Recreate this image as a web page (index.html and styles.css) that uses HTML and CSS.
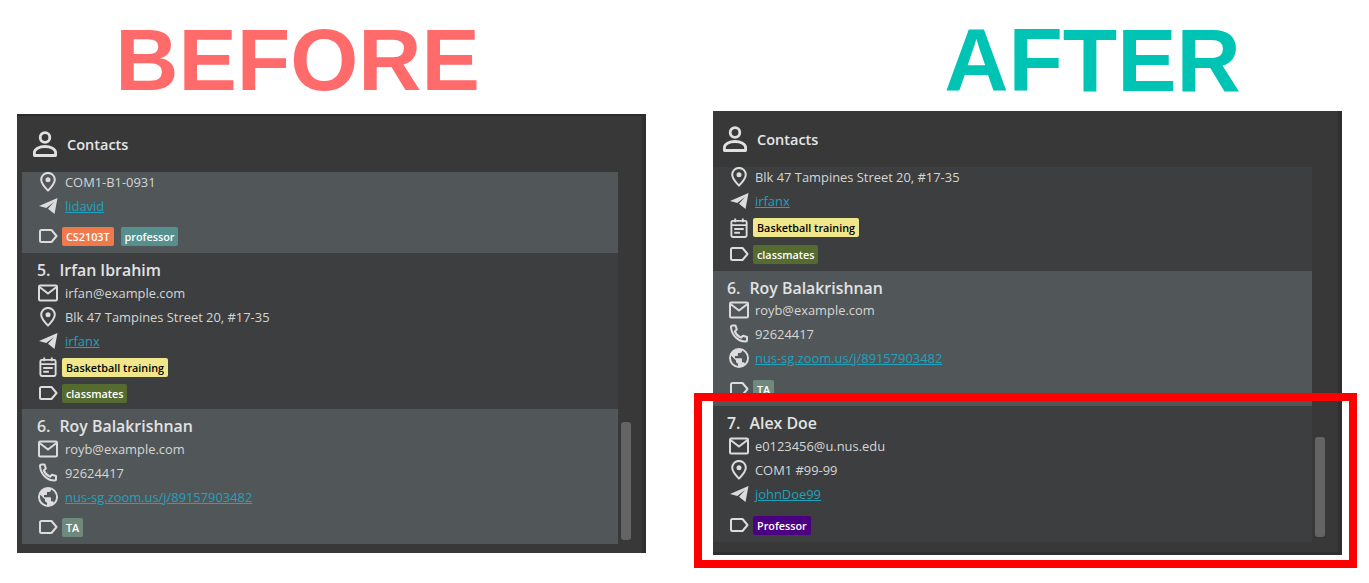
FILE: index.html
```html
<!DOCTYPE html>
<html lang="en">
<head>
  <meta charset="UTF-8">
  <title>Before and after</title>
  <link rel="stylesheet" href="styles.css">
</head>
<body>
  <svg class="sprites" width="0" height="0">
    <symbol id="i-person" viewBox="0 0 26 26">
      <circle cx="13" cy="6.500" r="4.800" fill="none" stroke="currentColor" stroke-width="2.800"/>
      <path d="M2.400 24.500v-3c0-3.600 4.800-6 10.600-6s10.600 2.400 10.600 6v3z" fill="none" stroke="currentColor" stroke-width="2.800" stroke-linejoin="round"/>
    </symbol>
    <symbol id="i-mail" viewBox="0 0 20 17">
      <rect x="1" y="1" width="18" height="15" rx="1.200" fill="none" stroke="currentColor" stroke-width="2"/>
      <path d="M1.500 2.500L10 9l8.500-6.500" fill="none" stroke="currentColor" stroke-width="2"/>
    </symbol>
    <symbol id="i-pin" viewBox="0 0 16 20">
      <path d="M8 18.600C4.500 15 1.200 11.500 1.200 7.700a6.800 6.800 0 0 1 13.600 0c0 3.800-3.300 7.300-6.800 10.900z" fill="none" stroke="currentColor" stroke-width="2" stroke-linejoin="round"/>
      <circle cx="8" cy="7.700" r="2.500" fill="currentColor"/>
    </symbol>
    <symbol id="i-send" viewBox="0 0 20 17">
      <path d="M1 8.500L19.500 .5 16.500 16.500 10 11.200 16 4.500 8.300 10.500z" fill="currentColor"/>
    </symbol>
    <symbol id="i-calendar" viewBox="0 0 18 21">
      <rect x="1" y="3" width="16" height="17" rx="1.500" fill="none" stroke="currentColor" stroke-width="2"/>
      <path d="M5 0.500v4M13 0.500v4M1 7.500h16M4 11.500h10M4 15.500h6" fill="none" stroke="currentColor" stroke-width="2"/>
    </symbol>
    <symbol id="i-label" viewBox="0 0 20 14">
      <path d="M3.500 1h10l5 6-5 6h-10A1.500 1.500 0 0 1 2 11.500v-9A1.500 1.500 0 0 1 3.500 1z" fill="none" stroke="currentColor" stroke-width="2" stroke-linejoin="round"/>
    </symbol>
    <symbol id="i-phone" viewBox="0 0 20 20">
      <path d="M3.500 1.500h3l1.300 4-2 2c1.200 2.800 3.400 5 6.200 6.200l2-2 4 1.300v3c0 .8-.7 1.500-1.500 1.500C9 17.500 2.500 11 2 3 2 2.200 2.700 1.500 3.500 1.500z" fill="none" stroke="currentColor" stroke-width="2" stroke-linejoin="round"/>
    </symbol>
    <symbol id="i-globe" viewBox="0 0 20 20">
      <path fill-rule="evenodd" d="M10 0a10 10 0 1 0 0 20 10 10 0 0 0 0-20zM2 10c0-.8.100-1.500.300-2.200L7 12.500v1c0 1.100.9 2 2 2v2.400A8 8 0 0 1 2 10zm13.800 5.600c-.3-.8-1-1.300-1.800-1.300h-1v-3c0-.6-.4-1-1-1H6V8h2c.6 0 1-.4 1-1V5h2c1.100 0 2-.9 2-2v-.4a8 8 0 0 1 2.800 13z" fill="currentColor"/>
    </symbol>
  </svg>

  <main class="page">
    <section class="side side-before">
      <h1 class="title title-before">BEFORE</h1>
      <div class="panel panel-before">
        <header class="panel-head">
          <svg class="head-icon"><use href="#i-person"/></svg>
          <span>Contacts</span>
        </header>
        <div class="body-row">
          <div class="list">
            <article class="card card-light card-cut">
              <div class="row"><svg class="icon"><use href="#i-pin"/></svg>COM1-B1-0931</div>
              <div class="row"><svg class="icon"><use href="#i-send"/></svg><a href="#">lidavid</a></div>
              <div class="row-tags row-gap"><svg class="icon"><use href="#i-label"/></svg><span class="tag tag-orange">CS2103T</span><span class="tag tag-teal">professor</span></div>
            </article>
            <article class="card card-dark">
              <h2 class="name"><span class="num">5.</span>Irfan Ibrahim</h2>
              <div class="row"><svg class="icon"><use href="#i-mail"/></svg>irfan@example.com</div>
              <div class="row"><svg class="icon"><use href="#i-pin"/></svg>Blk 47 Tampines Street 20, #17-35</div>
              <div class="row"><svg class="icon"><use href="#i-send"/></svg><a href="#">irfanx</a></div>
              <div class="row-tags row-sched"><svg class="icon"><use href="#i-calendar"/></svg><span class="tag tag-yellow">Basketball training</span></div>
              <div class="row-tags"><svg class="icon"><use href="#i-label"/></svg><span class="tag tag-green">classmates</span></div>
            </article>
            <article class="card card-light">
              <h2 class="name"><span class="num">6.</span>Roy Balakrishnan</h2>
              <div class="row"><svg class="icon"><use href="#i-mail"/></svg>royb@example.com</div>
              <div class="row"><svg class="icon"><use href="#i-phone"/></svg>92624417</div>
              <div class="row"><svg class="icon"><use href="#i-globe"/></svg><a href="#">nus-sg.zoom.us/j/89157903482</a></div>
              <div class="row-tags row-gap"><svg class="icon"><use href="#i-label"/></svg><span class="tag tag-sage">TA</span></div>
            </article>
          </div>
          <div class="track track-before"><div class="thumb thumb-before"></div></div>
        </div>
      </div>
    </section>

    <section class="side side-after">
      <h1 class="title title-after">AFTER</h1>
      <div class="panel panel-after">
        <header class="panel-head">
          <svg class="head-icon"><use href="#i-person"/></svg>
          <span>Contacts</span>
        </header>
        <div class="body-row">
          <div class="list">
            <article class="card card-dark card-cut">
              <div class="row"><svg class="icon"><use href="#i-pin"/></svg>Blk 47 Tampines Street 20, #17-35</div>
              <div class="row"><svg class="icon"><use href="#i-send"/></svg><a href="#">irfanx</a></div>
              <div class="row-tags row-sched"><svg class="icon"><use href="#i-calendar"/></svg><span class="tag tag-yellow">Basketball training</span></div>
              <div class="row-tags"><svg class="icon"><use href="#i-label"/></svg><span class="tag tag-green">classmates</span></div>
            </article>
            <article class="card card-light">
              <h2 class="name"><span class="num">6.</span>Roy Balakrishnan</h2>
              <div class="row"><svg class="icon"><use href="#i-mail"/></svg>royb@example.com</div>
              <div class="row"><svg class="icon"><use href="#i-phone"/></svg>92624417</div>
              <div class="row"><svg class="icon"><use href="#i-globe"/></svg><a href="#">nus-sg.zoom.us/j/89157903482</a></div>
              <div class="row-tags row-gap"><svg class="icon"><use href="#i-label"/></svg><span class="tag tag-sage">TA</span></div>
            </article>
            <article class="card card-dark">
              <h2 class="name"><span class="num">7.</span>Alex Doe</h2>
              <div class="row"><svg class="icon"><use href="#i-mail"/></svg>e0123456@u.nus.edu</div>
              <div class="row"><svg class="icon"><use href="#i-pin"/></svg>COM1 #99-99</div>
              <div class="row"><svg class="icon"><use href="#i-send"/></svg><a href="#">johnDoe99</a></div>
              <div class="row-tags row-gap"><svg class="icon"><use href="#i-label"/></svg><span class="tag tag-purple">Professor</span></div>
            </article>
          </div>
          <div class="track track-after"><div class="thumb thumb-after"></div></div>
        </div>
      </div>
      <div class="highlight"></div>
    </section>
  </main>
</body>
</html>
```

FILE: styles.css
```css
body {
  margin: 0;
  background: #fff;
  font-family: "Open Sans", "Noto Sans", sans-serif;
  color: #d6d6d6;
}
.sprites {
  position: absolute;
}
.page {
  display: flex;
  align-items: flex-start;
  min-height: 583px;
  padding-left: 17px;
  gap: 67px;
}
.side {
  position: relative;
  width: 629px;
  display: flex;
  flex-direction: column;
}
.title {
  margin: 0;
  font-family: "Liberation Sans", Arial, sans-serif;
  font-size: 87.500px;
  font-weight: 700;
  text-align: center;
  white-space: nowrap;
}
.title-before {
  height: 114px;
  line-height: 120px;
  padding-right: 68px;
  color: #ff6b6b;
}
.title-after {
  height: 111px;
  line-height: 120px;
  padding-left: 130px;
  font-size: 89px;
  color: #00c4b3;
}
.panel {
  background: #383838;
  border-right: 4px solid #2f2f2f;
  display: flex;
  flex-direction: column;
  overflow: hidden;
}
.panel-before {
  height: 439px;
  border-top: 2px solid #2b2b2b;
  box-sizing: border-box;
}
.panel-after {
  height: 444px;
  box-sizing: border-box;
  border-bottom: 3px solid #2f2f2f;
}
.panel-head {
  display: flex;
  align-items: center;
  gap: 9px;
  font-size: 14.5px;
  font-weight: 600;
  color: #e6e6e6;
}
.panel-before .panel-head {
  height: 56px;
  padding-left: 15px;
}
.panel-after .panel-head {
  height: 56px;
  padding-left: 9px;
}
.head-icon {
  width: 26px;
  height: 26px;
  color: #e0e0e0;
}
.body-row {
  flex: 1;
  display: flex;
  min-height: 0;
}
.list {
  overflow: hidden;
}
.panel-before .list {
  margin-left: 5px;
  width: 596px;
}
.panel-after .list {
  width: 599px;
}
.card {
  padding: 6px 0 4px 16px;
}
.card-cut {
  padding-top: 0;
}
.card-cut .row:first-child {
  margin-top: -2px;
}
.card-light {
  background: #515658;
}
.card-dark {
  background: #3c3e3f;
}
.name {
  margin: 0 0 0 -1px;
  height: 22px;
  line-height: 22px;
  font-size: 15.900px;
  font-weight: 600;
  color: #e2e2e2;
}
.num {
  margin-right: 9px;
}
.panel-after .name {
  margin-left: -2px;
}
.panel-after .card-light .name {
  height: 21px;
}
.row,
.row-tags {
  display: flex;
  align-items: center;
  font-size: 12.900px;
}
.row {
  height: 24px;
}
.row-tags {
  height: 26px;
}
.row-sched {
  margin-top: 1px;
}
.panel-before .card-dark {
  padding-bottom: 3px;
}
.panel-after .row-sched {
  height: 27px;
}
.row-gap {
  margin-top: 5px;
}
.panel-after .row-gap {
  margin-top: 6px;
}
.icon {
  width: 20px;
  height: 20px;
  flex: none;
  margin-right: 7px;
  color: #dcdcdc;
}
.panel-after .row .icon {
  margin-right: 6px;
}
.row-tags .icon {
  margin-right: 4px;
}
a {
  color: #22a2bd;
}
.tag {
  padding: 0 4px;
  height: 19px;
  line-height: 19px;
  border-radius: 2px;
  font-size: 10.800px;
  font-weight: 600;
  color: #fff;
  margin-right: 7px;
}
.tag-orange { background: #f0794c; }
.tag-teal { background: #55908f; }
.tag-yellow { background: #f0e68c; color: #000; }
.tag-green { background: #556b2f; }
.tag-sage { background: #6f8a7c; }
.tag-purple { background: #4b0082; }
.track {
  flex: none;
  display: flex;
  flex-direction: column;
}
.thumb {
  width: 10px;
  border-radius: 3px;
  background: #646464;
}
.track-before {
  padding: 250px 0 0 3px;
}
.thumb-before {
  height: 118px;
}
.track-after {
  padding: 270px 0 0 3px;
}
.thumb-after {
  height: 100px;
}
.highlight {
  position: absolute;
  left: -19px;
  top: 393px;
  width: 647px;
  height: 159px;
  border: 8px solid #fe0000;
}
```
